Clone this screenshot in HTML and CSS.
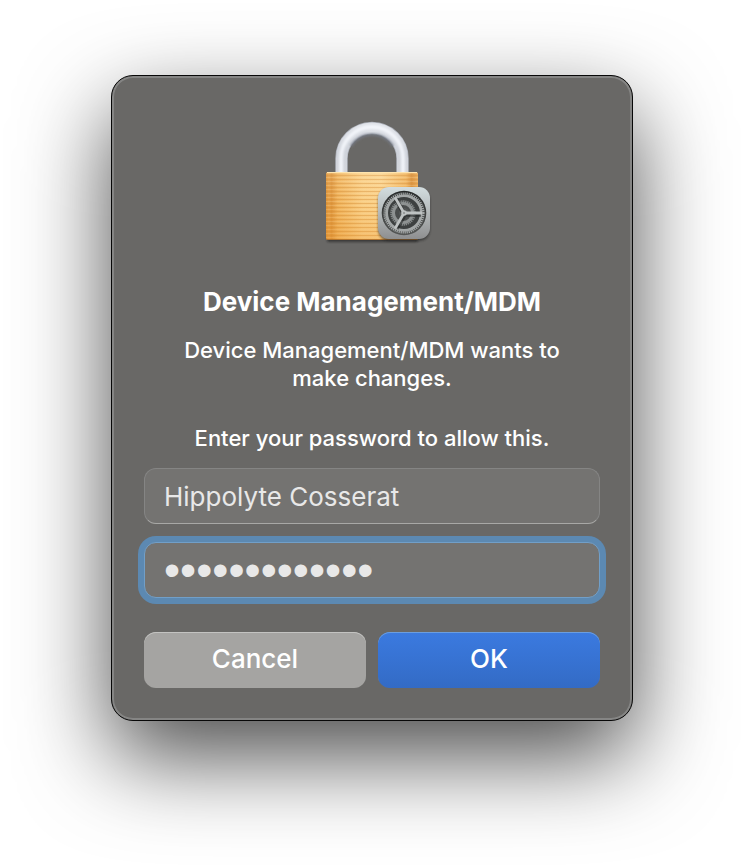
FILE: index.html
```html
<!DOCTYPE html>
<html lang="en">
<head>
<meta charset="utf-8">
<meta name="viewport" content="width=device-width, initial-scale=1">
<title>Device Management/MDM</title>
<link rel="stylesheet" href="styles.css">
</head>
<body>
<main class="dialog" role="dialog" aria-labelledby="title" aria-describedby="message">
  <svg class="lock" viewBox="0 0 128 128" aria-hidden="true">
    <defs>
      <linearGradient id="brass" x1="0" x2="1" y1="0" y2="0">
        <stop offset="0" stop-color="#d98f35"/>
        <stop offset=".03" stop-color="#e6a047"/>
        <stop offset=".06" stop-color="#dd943b"/>
        <stop offset=".13" stop-color="#f0b35c"/>
        <stop offset=".4" stop-color="#fad088"/>
        <stop offset=".6" stop-color="#fbd48f"/>
        <stop offset=".87" stop-color="#f0b45e"/>
        <stop offset=".93" stop-color="#d98e36"/>
        <stop offset="1" stop-color="#eba84f"/>
      </linearGradient>
      <linearGradient id="shade" x1="0" x2="0" y1="0" y2="1">
        <stop offset="0" stop-color="#fff" stop-opacity=".1"/>
        <stop offset=".5" stop-color="#e89a30" stop-opacity=".06"/>
        <stop offset="1" stop-color="#e8922a" stop-opacity=".3"/>
      </linearGradient>
      <pattern id="brush" width="92" height="4" patternUnits="userSpaceOnUse">
        <path d="M0 1.500h92" stroke="#d28a35" stroke-opacity=".42"/>
        <path d="M0 3.500h92" stroke="#ffe9b8" stroke-opacity=".22"/>
      </pattern>
      <linearGradient id="steel" x1="0" x2="0" y1="0" y2="1">
        <stop offset="0" stop-color="#dfe2e8"/>
        <stop offset=".5" stop-color="#cfd3db"/>
        <stop offset="1" stop-color="#d3d6dc"/>
      </linearGradient>
      <linearGradient id="plate" x1="0" x2="0" y1="0" y2="1">
        <stop offset="0" stop-color="#d3dddf"/>
        <stop offset=".5" stop-color="#b3b8b9"/>
        <stop offset="1" stop-color="#8e8f90"/>
      </linearGradient>
      <linearGradient id="well" x1="0" x2="0" y1="0" y2="1">
        <stop offset="0" stop-color="#252828"/>
        <stop offset="1" stop-color="#555756"/>
      </linearGradient>
      <filter id="soft" x="-20%" y="-20%" width="140%" height="140%">
        <feGaussianBlur stdDeviation="1"/>
      </filter>
    </defs>
    <rect x="19" y="118" width="91" height="6" rx="2" fill="#222" opacity=".65" filter="url(#soft)"/>
    <g fill="none">
      <path d="M33.500 56V40.500a30.500 30.500 0 0 1 61 0V56" stroke="#adb1ba" stroke-width="12.500"/>
      <path d="M33.500 56V40.500a30.500 30.500 0 0 1 61 0V56" stroke="url(#steel)" stroke-width="11"/>
      <path d="M33 56V40a31 31 0 0 1 62 0V56" stroke="#f8faff" stroke-opacity=".8" stroke-width="4" filter="url(#soft)"/>
      <path d="M43 28a25 25 0 0 1 42 0" stroke="#777c88" stroke-opacity=".8" stroke-width="2.500" filter="url(#soft)"/>
    </g>
    <rect x="18" y="54" width="92" height="68" rx="2" fill="url(#brass)"/>
    <rect x="18" y="54" width="92" height="68" rx="2" fill="url(#brush)"/>
    <rect x="18" y="54" width="92" height="68" rx="2" fill="url(#shade)"/>
    <path d="M19 54.500h90" stroke="#ffe4ad"/>
    <path d="M19 121.500h90" stroke="#a96a25" stroke-opacity=".8"/>
    <rect x="70" y="71" width="52" height="52" rx="11" fill="#222" opacity=".55" filter="url(#soft)"/>
    <rect x="70" y="69" width="52" height="52" rx="11" fill="url(#plate)"/>
    <circle cx="96" cy="95" r="22.300" fill="url(#well)"/>
    <circle cx="96" cy="95" r="19.300" fill="none" stroke="#a5a9a9" stroke-width="2.600" stroke-dasharray="1.200 .821"/>
    <circle cx="96" cy="95" r="17.300" fill="#3d4040" stroke="#a3a7a7" stroke-width="2.600"/>
    <circle cx="95" cy="95" r="11.500" fill="none" stroke="#868a8a" stroke-width="2.500" stroke-dasharray="1.300 .700"/>
    <circle cx="95" cy="95" r="9.500" fill="#4a4d4d" stroke="#8e9292" stroke-width="3"/>
    <circle cx="96" cy="95" r="5" fill="#555858"/>
    <g stroke="#202323" stroke-opacity=".6" stroke-width="4.500">
      <path d="M96 96.500h17M96 96l-8-15M97 96l-8.500 14.500"/>
    </g>
    <g stroke="#bec2c2" stroke-width="2.800">
      <path d="M96 95h18M96 95l-9-15.600M96 95l-9 15.600"/>
    </g>
    <circle cx="96" cy="95" r="2.800" fill="#bec2c2"/>
    <circle cx="96" cy="95" r="1" fill="#8a8e8e"/>
  </svg>
  <h1 class="title" id="title">Device Management/MDM</h1>
  <div class="message" id="message">
    <p>Device Management/MDM wants to make changes.</p>
    <p>Enter your password to allow this.</p>
  </div>
  <form class="form">
    <input class="field" type="text" aria-label="User name" autocomplete="off" value="Hippolyte Cosserat">
    <input class="field field-active" type="password" aria-label="Password" autocomplete="off" value="0000000000000">
    <div class="actions">
      <button class="button" type="button">Cancel</button>
      <button class="button button-primary" type="submit">OK</button>
    </div>
  </form>
</main>
</body>
</html>
```
FILE: styles.css
```css
* { box-sizing: border-box; }

body {
  min-height: 100vh;
  margin: 0;
  padding: 75px 24px 147px;
  background: #fff;
  color: #fff;
  font-family: Inter, "Liberation Sans", sans-serif;
}

.dialog {
  display: flex;
  flex-direction: column;
  align-items: center;
  max-width: 522px;
  margin: 0 auto;
  padding: 42px 32px 32px;
  border: 1px solid #080808;
  border-radius: 22px;
  background: #696866;
  box-shadow:
    inset 0 0 0 2px #858584,
    0 36px 90px rgba(0, 0, 0, .7);
}

.lock {
  width: 128px;
  height: 128px;
}

.title {
  margin: 40px 0 18px;
  font-size: 26px;
  font-weight: 700;
  line-height: 32px;
  text-align: center;
}

.message {
  display: grid;
  gap: 32px;
  max-width: 400px;
  font-size: 22px;
  font-weight: 500;
  line-height: 28px;
  text-align: center;
}

.message p { margin: 0; }

.form {
  display: grid;
  gap: 18px;
  width: 100%;
  margin-top: 16px;
}

.field {
  width: 100%;
  height: 56px;
  padding: 0 19px;
  border: 1px solid #858584;
  border-bottom-color: #a8a8a6;
  border-radius: 12px;
  outline: 0;
  background: #747371;
  color: #e8e8e8;
  font: 400 26px Inter, "Liberation Sans", sans-serif;
}

.field-active {
  border-color: #719fc8;
  box-shadow: 0 0 0 6px #5c89b2;
  font: 400 46px "Liberation Sans", sans-serif;
}

.actions {
  display: grid;
  grid-template-columns: 1fr 1fr;
  gap: 12px;
  margin-top: 16px;
}

.button {
  height: 56px;
  padding: 0 0 4px;
  border: 0;
  border-radius: 12px;
  background: #a5a4a2;
  box-shadow: inset 0 1px #c3c3c1;
  color: #fff;
  font: 500 26px Inter, "Liberation Sans", sans-serif;
}

.button-primary {
  background: linear-gradient(#3b7ae0, #336bc5);
  box-shadow: inset 0 1px #6b9ee0;
}
```
